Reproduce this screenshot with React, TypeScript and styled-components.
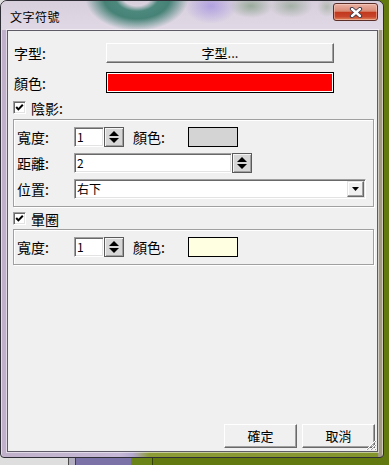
import styled, { createGlobalStyle } from 'styled-components';

const GlobalStyle = createGlobalStyle`
  html, body {
    margin: 0;
    padding: 0;
  }
  body {
    width: 389px;
    height: 465px;
    overflow: hidden;
    font-family: "Noto Sans CJK TC", "Noto Sans", sans-serif;
    color: #000;
  }
`;

const Desktop = styled.div`
  width: 389px;
  height: 465px;
  overflow: hidden;
  background: linear-gradient(
    to right,
    #dedede 0 68px,
    #4a4a4a 68px 69px,
    #b2aec0 69px 75px,
    #3c3a58 75px 76px,
    #7b73a8 76px 131px,
    #6b8417 131px 152px,
    #34420a 152px 153px,
    #62790f 153px
  );
`;

const Window = styled.div`
  width: 384px;
  height: 458px;
  box-sizing: border-box;
  display: flex;
  flex-direction: column;
  padding: 0 5px 5px 6px;
  border: 1px solid #2f2d36;
  border-radius: 7px 7px 4px 4px;
  overflow: hidden;
  background:
    linear-gradient(to left, #d2cabd 0 1px, #a39a86 1px 5px, transparent 5px),
    linear-gradient(to right, #c0b0ca 0, #c6b8d6 118px, #b4a8d0 132px, #8e9c38 148px, #84942c 100%);
  box-shadow: inset 1px 0 0 rgba(255, 255, 255, 0.55);
`;

const TitleBar = styled.div`
  display: flex;
  justify-content: space-between;
  align-items: flex-start;
  height: 29px;
  flex-shrink: 0;
  margin: 0 -5px 0 -6px;
  padding: 0 5px 0 9px;
  box-sizing: border-box;
  background:
    radial-gradient(ellipse 52px 34px at 136px -4px,
      rgba(60, 128, 112, 0) 0 26%,
      rgba(52, 124, 108, 0.85) 42%,
      rgba(44, 116, 100, 0.85) 64%,
      rgba(44, 116, 100, 0) 100%),
    radial-gradient(ellipse 26px 18px at 210px 5px, rgba(150, 128, 225, 0.6), rgba(150, 128, 225, 0)),
    radial-gradient(ellipse 22px 12px at 250px 5px, rgba(110, 145, 110, 0.6), rgba(110, 145, 110, 0)),
    radial-gradient(ellipse 22px 12px at 290px 5px, rgba(120, 150, 120, 0.55), rgba(120, 150, 120, 0)),
    radial-gradient(ellipse 10px 10px at 326px 6px, rgba(120, 150, 110, 0.4), rgba(120, 150, 110, 0)),
    linear-gradient(to bottom, #d8cfdd, #e0d9e5);
`;

const Title = styled.span`
  padding-top: 8px;
  font-size: 12px;
  line-height: 16px;
  letter-spacing: 0.5px;
`;

const CloseButton = styled.div`
  width: 45px;
  height: 18px;
  margin-top: 2px;
  box-sizing: border-box;
  display: flex;
  align-items: center;
  justify-content: center;
  border: 1px solid #5b2e28;
  border-radius: 3px;
  background: linear-gradient(
    to bottom,
    #eab2a4 0,
    #d98a74 45%,
    #c2381c 52%,
    #c7442a 78%,
    #e0875e 100%
  );
  box-shadow: inset 0 0 0 1px rgba(255, 220, 210, 0.45);
`;

const Client = styled.div`
  flex: 1;
  position: relative;
  display: flex;
  flex-direction: column;
  padding: 12px 2px 3px 5px;
  background: #f0f0f0;
  border: 1px solid #5e5b66;
  box-shadow: 0 0 0 1px rgba(255, 255, 255, 0.5);
`;

const TopRow = styled.div<{ $top?: number }>`
  display: flex;
  align-items: center;
  margin-top: ${(p) => p.$top ?? 0}px;
`;

const TopLabel = styled.span`
  width: 93px;
  padding-left: 1px;
  box-sizing: border-box;
  font-size: 14px;
  line-height: 16px;
`;

const PushButton = styled.button<{ $w: number; $h: number }>`
  width: ${(p) => p.$w}px;
  height: ${(p) => p.$h}px;
  padding: 0;
  margin: 0;
  box-sizing: border-box;
  font-family: "Noto Sans CJK TC", "Noto Sans", sans-serif;
  font-size: 13px;
  line-height: 16px;
  color: #000;
  background: #f0f0f0;
  border: 1px solid;
  border-color: #ffffff #696969 #696969 #ffffff;
  box-shadow: inset -1px -1px 0 #a0a0a0, inset 1px 1px 0 #f0f0f0;
`;

const Swatch = styled.div<{ $color: string; $w: number; $h: number; $inner?: boolean }>`
  width: ${(p) => p.$w}px;
  height: ${(p) => p.$h}px;
  box-sizing: border-box;
  border: 1px solid #000;
  background: ${(p) => p.$color};
  box-shadow: ${(p) => (p.$inner ? 'inset 0 0 0 1px #fff' : 'none')};
`;

const CheckRow = styled.label<{ $top: number }>`
  display: flex;
  align-items: center;
  gap: 5px;
  margin-top: ${(p) => p.$top}px;
  height: 13px;
  font-size: 14px;
  line-height: 16px;
`;

const CheckBox = styled.span`
  width: 13px;
  height: 13px;
  box-sizing: border-box;
  display: flex;
  align-items: center;
  justify-content: center;
  background: #fff;
  border: 1px solid;
  border-color: #a0a0a0 #ffffff #ffffff #a0a0a0;
  box-shadow: inset 1px 1px 0 #696969, inset -1px -1px 0 #e3e3e3;
`;

const Group = styled.div<{ $top: number }>`
  display: flex;
  flex-direction: column;
  gap: 6px;
  margin: ${(p) => p.$top}px 1px 0 0;
  padding: 7px 3px 7px;
  border: 1px solid #a0a0a0;
  box-shadow: inset 1px 1px 0 #fff, 1px 1px 0 #fff;
`;

const FieldRow = styled.div`
  display: flex;
  align-items: center;
  height: 20px;
`;

const FieldLabel = styled.span<{ $w: number; $left?: number }>`
  width: ${(p) => p.$w}px;
  margin-left: ${(p) => p.$left ?? 0}px;
  flex-shrink: 0;
  font-size: 14px;
  line-height: 16px;
`;

const TextBox = styled.div<{ $w: number }>`
  width: ${(p) => p.$w}px;
  height: 20px;
  box-sizing: border-box;
  display: flex;
  align-items: center;
  justify-content: space-between;
  padding-left: 2px;
  background: #fff;
  border: 1px solid;
  border-color: #a0a0a0 #ffffff #ffffff #a0a0a0;
  box-shadow: inset 1px 1px 0 #696969, inset -1px -1px 0 #e3e3e3;
  font-size: 12px;
  line-height: 14px;
`;

const SpinButton = styled.div`
  width: 20px;
  height: 20px;
  box-sizing: border-box;
  display: flex;
  align-items: center;
  justify-content: center;
  background: #d6d6d6;
  border: 1px solid #5a5a5a;
  box-shadow: inset 1px 1px 0 #f4f4f4, inset -1px -1px 0 #a0a0a0;
`;

const DropButton = styled.div`
  width: 17px;
  height: 16px;
  margin-right: 1px;
  box-sizing: border-box;
  display: flex;
  align-items: center;
  justify-content: center;
  background: #f0f0f0;
  border: 1px solid;
  border-color: #e3e3e3 #696969 #696969 #e3e3e3;
  box-shadow: inset -1px -1px 0 #a0a0a0, inset 1px 1px 0 #fff;
`;

const ButtonBar = styled.div`
  display: flex;
  justify-content: flex-end;
  gap: 5px;
  margin-top: auto;
`;

const Grip = styled.svg`
  position: absolute;
  right: 0;
  bottom: 0;
`;

function SpinArrows() {
  return (
    <svg width="18" height="18" viewBox="0 0 18 18">
      <polygon points="4,8 9,3 14,8" fill="#000" />
      <polygon points="4,10 14,10 9,15" fill="#000" />
    </svg>
  );
}

function Check() {
  return (
    <svg width="11" height="11" viewBox="0 0 11 11">
      <path d="M2.2 5 L4.4 7.4 L8.8 2.8" fill="none" stroke="#000" strokeWidth="2" />
    </svg>
  );
}

function Spinner({ value, width }: { value: string; width: number }) {
  return (
    <>
      <TextBox $w={width}>{value}</TextBox>
      <SpinButton>
        <SpinArrows />
      </SpinButton>
    </>
  );
}

export default function App() {
  return (
    <>
      <GlobalStyle />
      <Desktop>
        <Window>
          <TitleBar>
            <Title>文字符號</Title>
            <CloseButton>
              <svg width="14" height="11" viewBox="0 0 14 11">
                <path d="M3 2 L11 9 M11 2 L3 9" stroke="#3a3848" strokeWidth="4.2" strokeLinecap="round" />
                <path d="M3 2 L11 9 M11 2 L3 9" stroke="#fff" strokeWidth="2.4" strokeLinecap="round" />
              </svg>
            </CloseButton>
          </TitleBar>

          <Client>
            <TopRow>
              <TopLabel>字型:</TopLabel>
              <PushButton $w={228} $h={20}>
                字型...
              </PushButton>
            </TopRow>
            <TopRow $top={9}>
              <TopLabel>顏色:</TopLabel>
              <Swatch $color="#ff0000" $w={228} $h={21} $inner />
            </TopRow>

            <CheckRow $top={8}>
              <CheckBox>
                <Check />
              </CheckBox>
              陰影:
            </CheckRow>
            <Group $top={5}>
              <FieldRow>
                <FieldLabel $w={57}>寬度:</FieldLabel>
                <Spinner value="1" width={30} />
                <FieldLabel $w={55} $left={9}>
                  顏色:
                </FieldLabel>
                <Swatch $color="#d4d4d4" $w={50} $h={20} />
              </FieldRow>
              <FieldRow>
                <FieldLabel $w={57}>距離:</FieldLabel>
                <Spinner value="2" width={158} />
              </FieldRow>
              <FieldRow>
                <FieldLabel $w={57}>位置:</FieldLabel>
                <TextBox $w={292}>
                  右下
                  <DropButton>
                    <svg width="7" height="4" viewBox="0 0 7 4">
                      <polygon points="0,0 7,0 3.5,4" fill="#000" />
                    </svg>
                  </DropButton>
                </TextBox>
              </FieldRow>
            </Group>

            <CheckRow $top={5}>
              <CheckBox>
                <Check />
              </CheckBox>
              暈圈
            </CheckRow>
            <Group $top={4}>
              <FieldRow>
                <FieldLabel $w={57}>寬度:</FieldLabel>
                <Spinner value="1" width={30} />
                <FieldLabel $w={55} $left={9}>
                  顏色:
                </FieldLabel>
                <Swatch $color="#ffffe1" $w={50} $h={20} />
              </FieldRow>
            </Group>

            <ButtonBar>
              <PushButton $w={73} $h={24}>
                確定
              </PushButton>
              <PushButton $w={73} $h={24}>
                取消
              </PushButton>
            </ButtonBar>

            <Grip width="13" height="13" viewBox="0 0 13 13">
              <path d="M12 2 L2 12 M12 6 L6 12 M12 10 L10 12" stroke="#fff" strokeWidth="1" />
              <path d="M12 3 L3 12 M12 7 L7 12 M12 11 L11 12" stroke="#a0a0a0" strokeWidth="1" />
            </Grip>
          </Client>
        </Window>
      </Desktop>
    </>
  );
}
